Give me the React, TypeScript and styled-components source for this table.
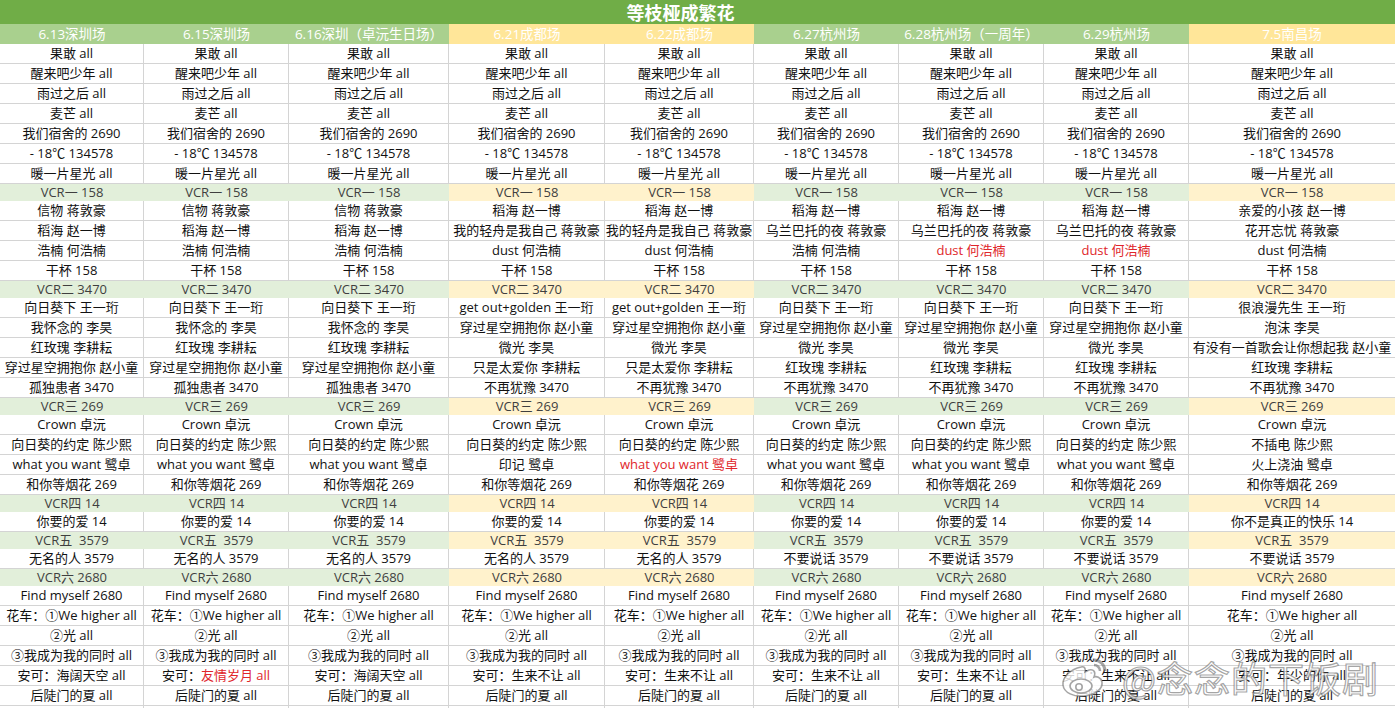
import React from "react";
import styled, { createGlobalStyle } from "styled-components";

const COLS = "144px 145px 160px 156px 149px 145px 145px 145px 206px";
const YELLOW = new Set([3, 4, 8]);

type Cell = string | { t: string; pre?: string; red?: boolean };
type Row = { kind: "data"; cells: Cell[] } | { kind: "section"; label: string };

const GlobalStyle = createGlobalStyle`
  html, body { margin: 0; padding: 0; background: #ffffff; }
  body { font-family: "Open Sans", "Noto Sans CJK SC", sans-serif; }
`;

const Page = styled.div`
  position: relative;
  width: 1395px;
  height: 708px;
  overflow: hidden;
  background: #fff;
`;

const Title = styled.div`
  height: 24px;
  background: #70ad47;
  color: #fff;
  font-family: "Noto Sans CJK SC", sans-serif;
  font-weight: 700;
  font-size: 18px;
  line-height: 24px;
  text-align: center;
  padding-right: 34px;
`;

const GridRow = styled.div<{ $h: number }>`
  display: grid;
  grid-template-columns: ${COLS};
  height: ${(p) => p.$h}px;
`;

const HeadCell = styled.div<{ $yellow: boolean }>`
  background: ${(p) => (p.$yellow ? "#ffe699" : "#a9d08e")};
  color: #ffffff;
  font-size: 13.5px;
  line-height: 20px;
  text-align: center;
  white-space: nowrap;
  overflow: hidden;
`;

const SectionCell = styled.div<{ $yellow: boolean }>`
  background: ${(p) => (p.$yellow ? "#fff2cc" : "#e2efda")};
  color: #3f3f3f;
  font-size: 13px;
  line-height: 17px;
  text-align: center;
  white-space: pre;
  overflow: hidden;
`;

const DataCell = styled.div<{ $last: boolean }>`
  box-sizing: border-box;
  border-bottom: 1px solid #d4d4d4;
  border-right: ${(p) => (p.$last ? "none" : "1px solid #d4d4d4")};
  color: #111;
  font-size: 13px;
  line-height: 19px;
  text-align: center;
  white-space: nowrap;
  overflow: hidden;
`;

const Red = styled.span`
  color: #e0262b;
`;

const Watermark = styled.div`
  position: absolute;
  right: 16px;
  bottom: 9px;
  display: flex;
  align-items: center;
  gap: 12px;
  pointer-events: none;
`;

const WatermarkText = styled.span`
  font-family: "Noto Sans CJK SC", sans-serif;
  font-size: 36px;
  line-height: 40px;
  color: rgba(255, 255, 255, 0.78);
  -webkit-text-stroke: 1.2px rgba(105, 105, 105, 0.6);
  letter-spacing: 1px;
`;

const rep = (t: Cell, n: number): Cell[] => Array(n).fill(t);
const same = (t: string): Row => ({ kind: "data", cells: rep(t, 9) });
const data = (...groups: Cell[][]): Row => ({ kind: "data", cells: groups.flat() });
const sec = (label: string): Row => ({ kind: "section", label });

const HEADERS = [
  "6.13深圳场",
  "6.15深圳场",
  "6.16深圳（卓沅生日场）",
  "6.21成都场",
  "6.22成都场",
  "6.27杭州场",
  "6.28杭州场（一周年）",
  "6.29杭州场",
  "7.5南昌场",
];

const ROWS: Row[] = [
  same("果敢 all"),
  same("醒来吧少年 all"),
  same("雨过之后 all"),
  same("麦芒 all"),
  same("我们宿舍的 2690"),
  same("- 18℃ 134578"),
  same("暖一片星光 all"),
  sec("VCR一 158"),
  data(rep("信物 蒋敦豪", 3), rep("稻海 赵一博", 5), ["亲爱的小孩 赵一博"]),
  data(rep("稻海 赵一博", 3), rep("我的轻舟是我自己 蒋敦豪", 2), rep("乌兰巴托的夜 蒋敦豪", 3), ["花开忘忧 蒋敦豪"]),
  data(
    rep("浩楠 何浩楠", 3),
    rep("dust 何浩楠", 2),
    ["浩楠 何浩楠"],
    rep({ t: "dust 何浩楠", red: true }, 2),
    ["dust 何浩楠"]
  ),
  same("干杯 158"),
  sec("VCR二 3470"),
  data(rep("向日葵下 王一珩", 3), rep("get out+golden 王一珩", 2), rep("向日葵下 王一珩", 3), ["很浪漫先生 王一珩"]),
  data(rep("我怀念的 李昊", 3), rep("穿过星空拥抱你 赵小童", 5), ["泡沫 李昊"]),
  data(rep("红玫瑰 李耕耘", 3), rep("微光 李昊", 5), ["有没有一首歌会让你想起我 赵小童"]),
  data(rep("穿过星空拥抱你 赵小童", 3), rep("只是太爱你 李耕耘", 2), rep("红玫瑰 李耕耘", 4)),
  data(rep("孤独患者 3470", 3), rep("不再犹豫 3470", 6)),
  sec("VCR三 269"),
  same("Crown 卓沅"),
  data(rep("向日葵的约定 陈少熙", 8), ["不插电 陈少熙"]),
  data(
    rep("what you want 鹭卓", 3),
    ["印记 鹭卓"],
    [{ t: "what you want 鹭卓", red: true }],
    rep("what you want 鹭卓", 3),
    ["火上浇油 鹭卓"]
  ),
  same("和你等烟花 269"),
  sec("VCR四 14"),
  data(rep("你要的爱 14", 8), ["你不是真正的快乐 14"]),
  sec("VCR五  3579"),
  data(rep("无名的人 3579", 5), rep("不要说话 3579", 4)),
  sec("VCR六 2680"),
  same("Find myself 2680"),
  same("花车：①We higher all"),
  same("②光 all"),
  same("③我成为我的同时 all"),
  data(
    ["安可：海阔天空 all"],
    [{ pre: "安可：", t: "友情岁月 all", red: true }],
    ["安可：海阔天空 all"],
    rep("安可：生来不让 all", 5),
    ["安可：年少的你 all"]
  ),
  same("后陡门的夏 all"),
  same(""),
];

const renderCell = (c: Cell) => {
  if (typeof c === "string") return c;
  return (
    <>
      {c.pre}
      {c.red ? <Red>{c.t}</Red> : c.t}
    </>
  );
};

const WeiboLogo = () => (
  <svg width="50" height="44" viewBox="0 0 50 44">
    <g fill="rgba(255,255,255,0.8)" stroke="rgba(105,105,105,0.6)" strokeWidth="1.6">
      <path d="M21 12 C11 14 2 22 3 30 C4 38 14 42 24 41 C35 40 43 34 42 27 C41 22 36 21 34 22 C36 17 34 14 29 15 L25 17 C26 13 24 11 21 12 Z" />
      <ellipse cx="21" cy="31" rx="11" ry="7" />
      <circle cx="19" cy="32" r="3.2" />
      <path d="M34 5 A11 11 0 0 1 45 16" fill="none" strokeWidth="3" />
      <path d="M34 10 A6 6 0 0 1 40 16" fill="none" strokeWidth="2.5" />
    </g>
  </svg>
);

export default function App() {
  return (
    <>
      <GlobalStyle />
      <Page>
        <Title>等枝桠成繁花</Title>
        <GridRow $h={20}>
          {HEADERS.map((h, i) => (
            <HeadCell key={i} $yellow={YELLOW.has(i)}>
              {h}
            </HeadCell>
          ))}
        </GridRow>
        {ROWS.map((r, ri) =>
          r.kind === "section" ? (
            <GridRow key={ri} $h={17}>
              {HEADERS.map((_, i) => (
                <SectionCell key={i} $yellow={YELLOW.has(i)}>
                  {r.label}
                </SectionCell>
              ))}
            </GridRow>
          ) : (
            <GridRow key={ri} $h={20}>
              {r.cells.map((c, i) => (
                <DataCell key={i} $last={i === 8}>
                  {renderCell(c)}
                </DataCell>
              ))}
            </GridRow>
          )
        )}
        <Watermark>
          <WeiboLogo />
          <WatermarkText>@念念的下饭剧</WatermarkText>
        </Watermark>
      </Page>
    </>
  );
}
